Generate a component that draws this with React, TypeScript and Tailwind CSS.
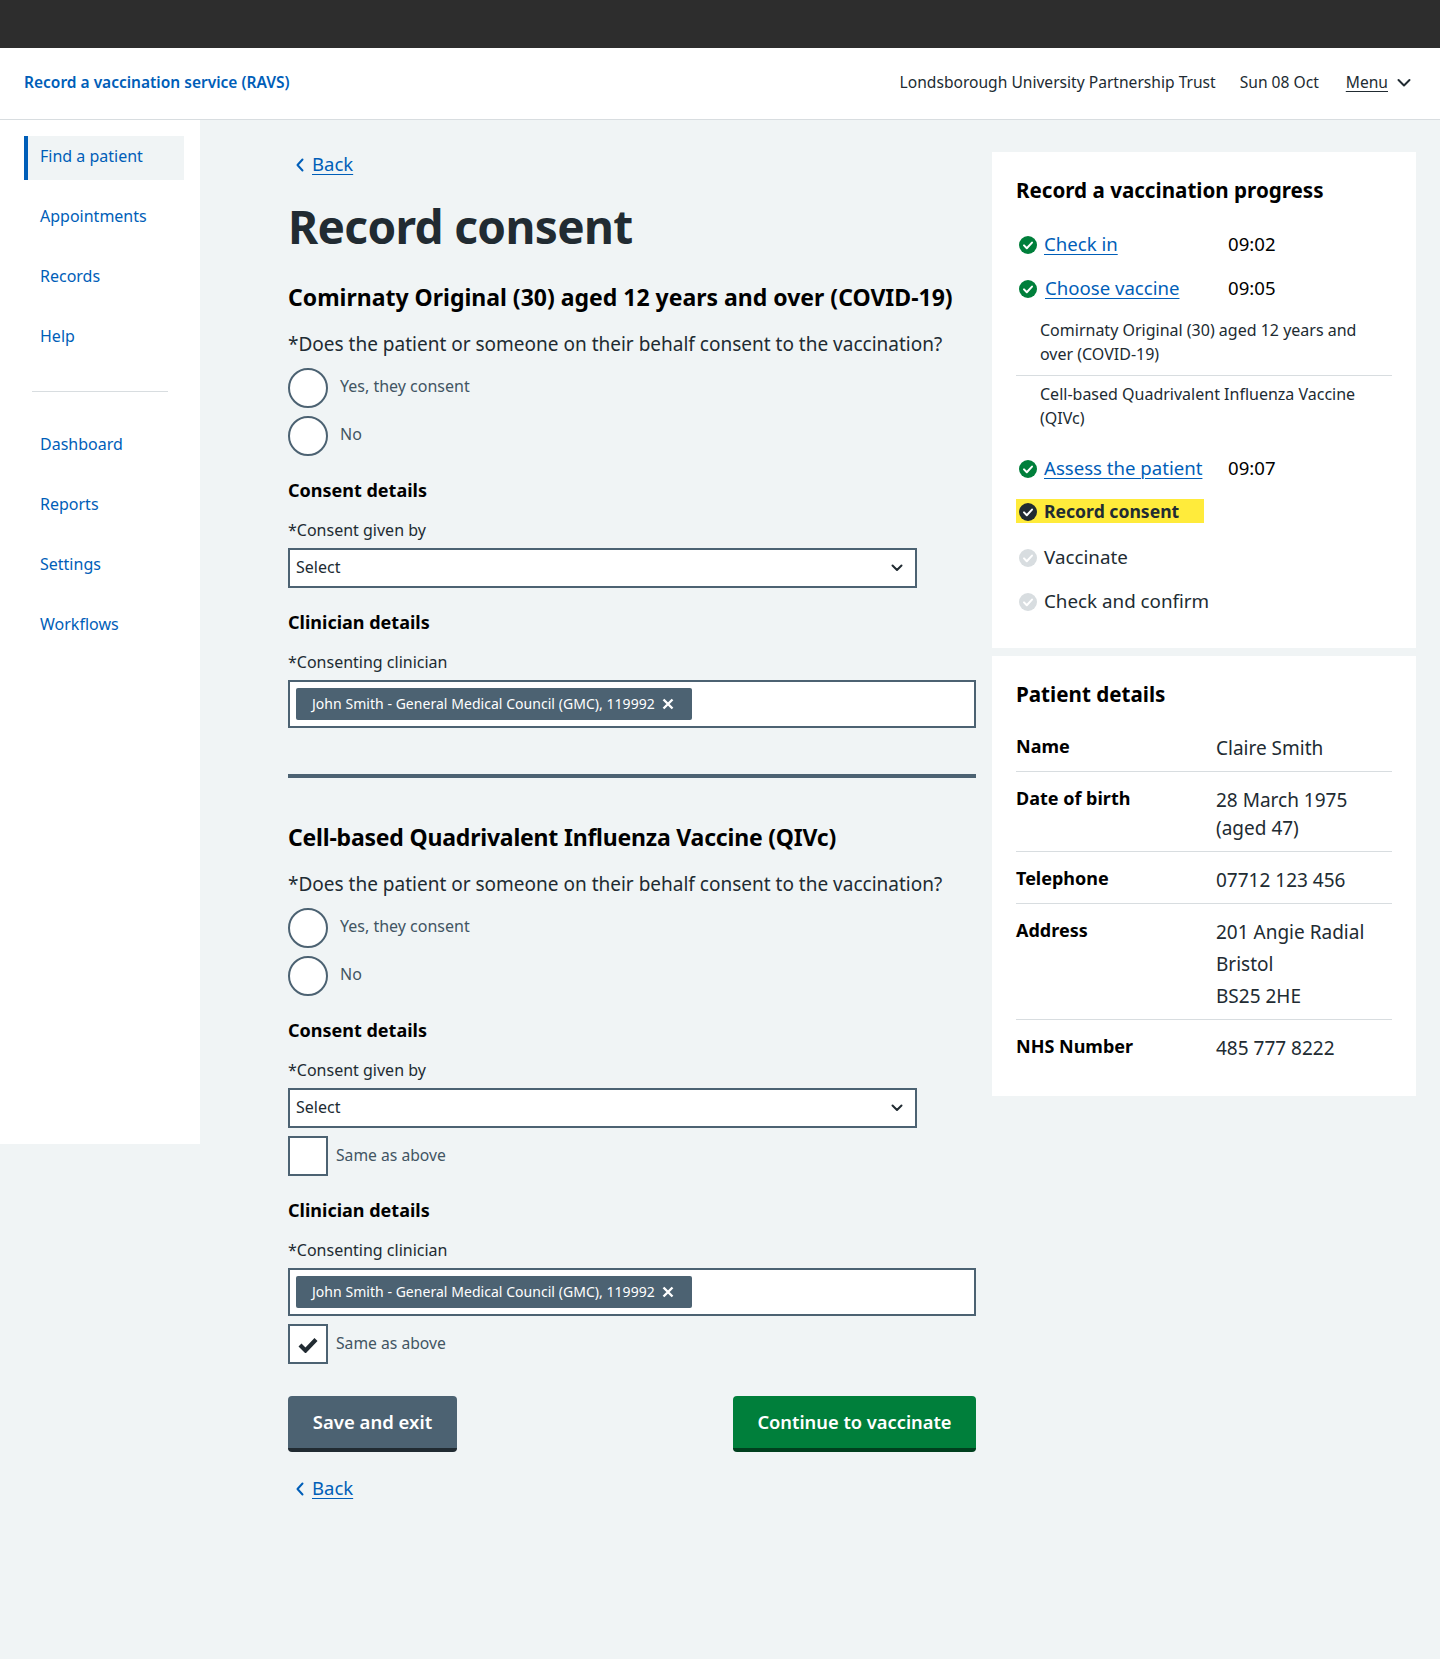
import React from "react";

const font = "font-['Noto_Sans',sans-serif]";

const navTop = ["Appointments", "Records", "Help"];
const navBottom = ["Dashboard", "Reports", "Settings", "Workflows"];

const StepIcon = ({ fill, tick }: { fill: string; tick: string }) => (
  <svg width="18" height="18" viewBox="0 0 18 18" className="shrink-0 mt-[2px]">
    <circle cx="9" cy="9" r="9" fill={fill} />
    <path d="M5 9.4l2.8 2.8L13 6.6" fill="none" stroke={tick} strokeWidth="2" strokeLinecap="round" strokeLinejoin="round" />
  </svg>
);

const BackLink = () => (
  <a className="flex items-center h-6 pl-[7px] text-[18.5px] leading-6 text-[#005eb8]">
    <svg width="10" height="14" viewBox="0 0 10 14" className="mr-[7px] mt-[2px]">
      <path d="M7.5 1.5L2.5 7l5 5.5" fill="none" stroke="#005eb8" strokeWidth="2" strokeLinecap="round" strokeLinejoin="round" />
    </svg>
    <span className="underline underline-offset-[3px] decoration-1">Back</span>
  </a>
);

const Radio = ({ label }: { label: string }) => (
  <div className="flex items-start">
    <span className="w-10 h-10 rounded-full border-2 border-[#4c6272] bg-white shrink-0" />
    <span className="ml-3 mt-[6px] text-[16px] leading-6 text-[#425563]">{label}</span>
  </div>
);

const Check = ({ checked }: { checked?: boolean }) => (
  <div className="flex items-start mt-2">
    <span className="w-10 h-10 border-2 border-[#4c6272] bg-white shrink-0 flex items-center justify-center">
      {checked && (
        <svg width="20" height="16" viewBox="0 0 20 16" className="mt-[1px]">
          <path d="M2 8l5.5 5.5L18 2.5" fill="none" stroke="#212b32" strokeWidth="4.2" />
        </svg>
      )}
    </span>
    <span className="ml-2 mt-[7px] text-[15.7px] leading-6 text-[#425563]">Same as above</span>
  </div>
);

const ConsentBlock = ({ title, same }: { title: string; same?: boolean }) => (
  <div>
    <h2 className={`text-[23px] leading-8 font-bold text-black ${same ? "tracking-[-0.2px]" : "tracking-normal"}`}>{title}</h2>
    <p className="mt-[17px] text-[19px] leading-7 text-[#212b32]">*Does the patient or someone on their behalf consent to the vaccination?</p>
    <div className="mt-[10px] flex flex-col gap-2">
      <Radio label="Yes, they consent" />
      <Radio label="No" />
    </div>
    <h3 className="mt-[22px] text-[18px] leading-6 font-bold text-black">Consent details</h3>
    <p className="mt-4 text-[16px] leading-6 text-[#212b32]">*Consent given by</p>
    <div className="mt-[6px] w-[629px] h-10 border-2 border-[#4c6272] bg-white flex items-center justify-between pl-[6px] pr-3 pb-[3px] text-[16px] text-[#212b32]">
      <span>Select</span>
      <svg width="12" height="10" viewBox="0 0 12 10" className="mt-[3px]">
        <path d="M1.5 2.5L6 7l4.5-4.5" fill="none" stroke="#212b32" strokeWidth="2" strokeLinecap="round" strokeLinejoin="round" />
      </svg>
    </div>
    {same && <Check />}
    <h3 className="mt-[22px] text-[18px] leading-6 font-bold text-black">Clinician details</h3>
    <p className="mt-4 text-[16px] leading-6 text-[#212b32]">*Consenting clinician</p>
    <div className="mt-[6px] h-12 border-2 border-[#4c6272] bg-white flex items-center pl-[6px]">
      <span className="h-8 w-[396px] rounded-[2px] bg-[#4c6272] flex items-center pl-4 text-[14px] tracking-[0.04px] text-white">
        <span className="pb-[2px]">John Smith - General Medical Council (GMC), 119992</span>
        <svg width="12" height="12" viewBox="0 0 12 12" className="ml-[7px]">
          <path d="M1.5 1.5l9 9M10.5 1.5l-9 9" stroke="#fff" strokeWidth="2.4" />
        </svg>
      </span>
    </div>
    {same && <Check checked />}
  </div>
);

const Step = ({ label, time, state, nudge }: { label: string; time?: string; state: "done" | "todo"; nudge?: boolean }) => (
  <div className="flex items-center h-7 pl-[3px]">
    {state === "done" ? <StepIcon fill="#007f3b" tick="#fff" /> : <StepIcon fill="#d8dde0" tick="#fff" />}
    {state === "done" ? (
      <a className={`${nudge ? "ml-2 w-[183px]" : "ml-[7px] w-[184px]"} shrink-0 text-[18.6px] leading-7 text-[#005eb8]`}>
        <span className="underline underline-offset-[3px] decoration-1">{label}</span>
      </a>
    ) : (
      <span className="ml-[7px] text-[18.8px] leading-7 text-[#212b32]">{label}</span>
    )}
    {time && <span className="text-[18.6px] leading-7 text-black">{time}</span>}
  </div>
);

const Detail = ({ name, lines, wide, last }: { name: string; lines: string[]; wide?: boolean; last?: boolean }) => (
  <div className={`flex ${last ? "" : "border-b border-[#d8dde0]"} ${wide ? "-mt-[2px] pb-[7px]" : "pb-[9px]"}`}>
    <div className={`w-[200px] shrink-0 text-[18px] font-bold text-black ${wide ? "leading-7" : "leading-6"}`}>{name}</div>
    <div className={`text-[19px] text-[#212b32] ${wide ? "leading-8" : "leading-7"}`}>
      {lines.map((l) => (
        <div key={l}>{l}</div>
      ))}
    </div>
  </div>
);

export default function App() {
  return (
    <div className={`${font} min-h-[1659px] bg-[#f0f4f5]`}>
      <div className="h-12 bg-[#2d2d2d]" />
      <header className="h-[72px] bg-white border-b border-[#d8dde0] flex items-center justify-between pl-6 pr-[29px] pb-[2px]">
        <a className="text-[15.5px] font-semibold text-[#005eb8]">Record a vaccination service (RAVS)</a>
        <div className="flex items-center text-[15.6px] text-[#212b32]">
          <span>Londsborough University Partnership Trust</span>
          <span className="ml-6">Sun 08 Oct</span>
          <span className="ml-[27px] underline underline-offset-[3px]">Menu</span>
          <svg width="14" height="10" viewBox="0 0 14 10" className="ml-[9px] mt-[2px]">
            <path d="M1.5 2L7 7.5 12.5 2" fill="none" stroke="#212b32" strokeWidth="2" strokeLinecap="round" strokeLinejoin="round" />
          </svg>
        </div>
      </header>
      <div className="flex items-start">
        <nav className="w-[200px] h-[1024px] shrink-0 bg-white pt-4 pl-6 pr-4 text-[16px] text-[#005eb8]">
          <div className="h-11 border-l-4 border-[#005eb8] bg-[#f0f4f5] pl-3 leading-[40px]">Find a patient</div>
          <div className="mt-4 flex flex-col gap-4">
            {navTop.map((n) => (
              <div key={n} className="h-11 pl-4 leading-[40px]">{n}</div>
            ))}
          </div>
          <div className="mt-[31px] mb-8 ml-2 w-[136px] border-t border-[#d8dde0]" />
          <div className="flex flex-col gap-4">
            {navBottom.map((n) => (
              <div key={n} className="h-11 pl-4 leading-[40px]">{n}</div>
            ))}
          </div>
        </nav>
        <main className="ml-[88px] w-[688px] shrink-0 pt-8">
          <BackLink />
          <h1 className="mt-[22px] text-[46px] tracking-[-0.65px] leading-[56px] font-bold text-[#212b32]">Record consent</h1>
          <div className="mt-[27px]">
            <ConsentBlock title="Comirnaty Original (30) aged 12 years and over (COVID-19)" />
          </div>
          <div className="mt-[46px] mb-[43px] h-1 bg-[#4c6272]" />
          <ConsentBlock title="Cell-based Quadrivalent Influenza Vaccine (QIVc)" same />
          <div className="mt-8 flex justify-between items-start">
            <button className="h-[56px] w-[169px] rounded-[4px] bg-[#4c6272] border-b-4 border-[#212b32] text-[18.5px] font-semibold text-white">Save and exit</button>
            <button className="h-[56px] w-[243px] rounded-[4px] bg-[#007f3b] border-b-4 border-[#00401e] text-[18.3px] font-semibold text-white">Continue to vaccinate</button>
          </div>
          <div className="mt-6">
            <BackLink />
          </div>
        </main>
        <aside className="ml-4 w-[424px] pt-8 flex flex-col gap-2">
          <section className="h-[496px] bg-white px-6 pt-[23px]">
            <h2 className="text-[20.6px] leading-[30px] font-bold text-black">Record a vaccination progress</h2>
            <div className="mt-[25px] flex flex-col gap-[16px]">
              <Step label="Check in" time="09:02" state="done" />
              <Step label="Choose vaccine" time="09:05" state="done" nudge />
            </div>
            <div className="mt-4 text-[16px] leading-6 text-[#212b32]">
              <p className="pl-6 pr-6 pb-[9px] border-b border-[#d8dde0]">Comirnaty Original (30) aged 12 years and over (COVID-19)</p>
              <p className="pl-6 pr-6 pt-[6px]">Cell-based Quadrivalent Influenza Vaccine (QIVc)</p>
            </div>
            <div className="mt-6">
              <Step label="Assess the patient" time="09:07" state="done" />
            </div>
            <div className="mt-[17px] h-6 w-[188px] bg-[#ffeb3b] flex items-center pl-[3px]">
              <StepIcon fill="#212b32" tick="#fff" />
              <span className="ml-[7px] text-[17.6px] font-bold text-[#212b32]">Record consent</span>
            </div>
            <div className="mt-5 flex flex-col gap-[16px]">
              <Step label="Vaccinate" state="todo" />
              <Step label="Check and confirm" state="todo" />
            </div>
          </section>
          <section className="h-[440px] bg-white px-6 pt-[23px]">
            <h2 className="text-[20.6px] leading-[30px] font-bold text-black">Patient details</h2>
            <div className="mt-[25px] flex flex-col gap-[14px]">
              <Detail name="Name" lines={["Claire Smith"]} />
              <Detail name="Date of birth" lines={["28 March 1975", "(aged 47)"]} />
              <Detail name="Telephone" lines={["07712 123 456"]} />
              <Detail name="Address" lines={["201 Angie Radial", "Bristol", "BS25 2HE"]} wide />
              <Detail name="NHS Number" lines={["485 777 8222"]} last />
            </div>
          </section>
        </aside>
      </div>
    </div>
  );
}
